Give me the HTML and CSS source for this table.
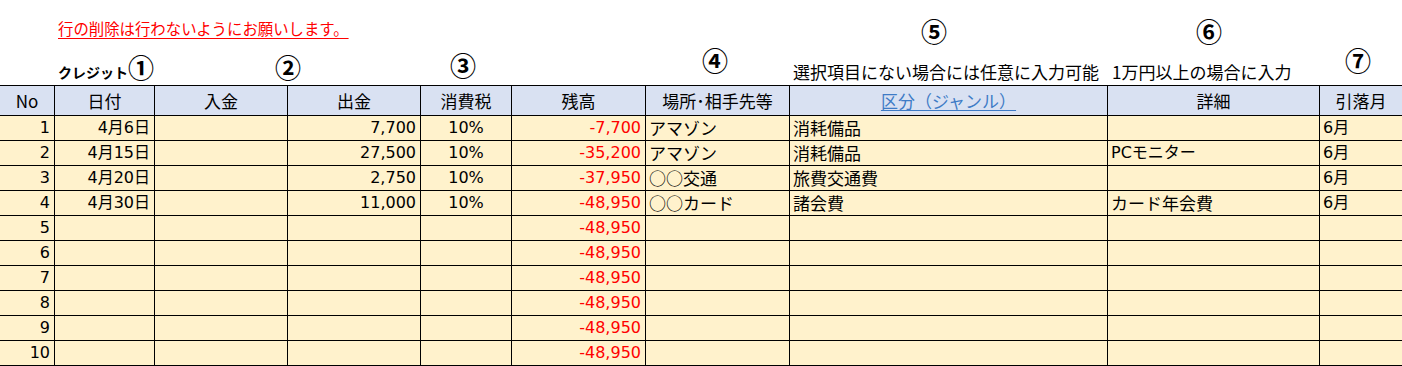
FILE: index.html
```html
<!DOCTYPE html>
<html lang="ja">
<head>
<meta charset="utf-8">
<title>クレジット</title>
<link rel="stylesheet" href="styles.css">
</head>
<body>
<div class="sheet">
  <div class="notes">
    <p class="warn">行の削除は行わないようにお願いします。</p>
    <span class="mark mark-5">⑤</span>
    <span class="mark mark-6">⑥</span>
    <div class="credit"><b class="credit-title">クレジット</b><span class="mark">①</span></div>
    <span class="mark mark-2">②</span>
    <span class="mark mark-3">③</span>
    <span class="mark mark-4">④</span>
    <p class="hint hint-5">選択項目にない場合には任意に入力可能</p>
    <p class="hint hint-6">1万円以上の場合に入力</p>
    <span class="mark mark-7">⑦</span>
  </div>

  <div class="ledger">
    <div class="h">No</div>
    <div class="h">日付</div>
    <div class="h">入金</div>
    <div class="h">出金</div>
    <div class="h">消費税</div>
    <div class="h">残高</div>
    <div class="h">場所･相手先等</div>
    <div class="h"><span class="link">区分（ジャンル）</span></div>
    <div class="h">詳細</div>
    <div class="h">引落月</div>

    <div class="c r num">1</div><div class="c r num">4月6日</div><div class="c"></div><div class="c r num">7,700</div><div class="c m num">10%</div><div class="c r num neg">-7,700</div><div class="c l">アマゾン</div><div class="c l">消耗備品</div><div class="c l"></div><div class="c l num">6月</div>
    <div class="c r num">2</div><div class="c r num">4月15日</div><div class="c"></div><div class="c r num">27,500</div><div class="c m num">10%</div><div class="c r num neg">-35,200</div><div class="c l">アマゾン</div><div class="c l">消耗備品</div><div class="c l num">PCモニター</div><div class="c l num">6月</div>
    <div class="c r num">3</div><div class="c r num">4月20日</div><div class="c"></div><div class="c r num">2,750</div><div class="c m num">10%</div><div class="c r num neg">-37,950</div><div class="c l">○○交通</div><div class="c l">旅費交通費</div><div class="c l"></div><div class="c l num">6月</div>
    <div class="c r num">4</div><div class="c r num">4月30日</div><div class="c"></div><div class="c r num">11,000</div><div class="c m num">10%</div><div class="c r num neg">-48,950</div><div class="c l">○○カード</div><div class="c l">諸会費</div><div class="c l">カード年会費</div><div class="c l num">6月</div>
    <div class="c r num">5</div><div class="c"></div><div class="c"></div><div class="c"></div><div class="c"></div><div class="c r num neg">-48,950</div><div class="c"></div><div class="c"></div><div class="c"></div><div class="c"></div>
    <div class="c r num">6</div><div class="c"></div><div class="c"></div><div class="c"></div><div class="c"></div><div class="c r num neg">-48,950</div><div class="c"></div><div class="c"></div><div class="c"></div><div class="c"></div>
    <div class="c r num">7</div><div class="c"></div><div class="c"></div><div class="c"></div><div class="c"></div><div class="c r num neg">-48,950</div><div class="c"></div><div class="c"></div><div class="c"></div><div class="c"></div>
    <div class="c r num">8</div><div class="c"></div><div class="c"></div><div class="c"></div><div class="c"></div><div class="c r num neg">-48,950</div><div class="c"></div><div class="c"></div><div class="c"></div><div class="c"></div>
    <div class="c r num">9</div><div class="c"></div><div class="c"></div><div class="c"></div><div class="c"></div><div class="c r num neg">-48,950</div><div class="c"></div><div class="c"></div><div class="c"></div><div class="c"></div>
    <div class="c r num">10</div><div class="c"></div><div class="c"></div><div class="c"></div><div class="c"></div><div class="c r num neg">-48,950</div><div class="c"></div><div class="c"></div><div class="c"></div><div class="c"></div>
  </div>
</div>
</body>
</html>
```

FILE: styles.css
```css
html, body {
  margin: 0;
  padding: 0;
  background: #ffffff;
}

body {
  font-family: "Noto Sans CJK JP", sans-serif;
  font-size: 17px;
  color: #000000;
}

.sheet {
  width: 1402px;
  height: 366px;
  overflow: hidden;
}

/* shared column template */
.notes,
.ledger {
  display: grid;
  grid-template-columns: 55px 100px 133px 133px 91px 134px 144px 318px 212px 82px;
}

/* ---------- annotation area above the table ---------- */
.notes {
  height: 85px;
  grid-template-rows: 46px 39px;
}

.notes p {
  margin: 0;
}

.warn {
  grid-column: 2 / 6;
  grid-row: 1;
  align-self: start;
  margin-top: 18px !important;
  padding-left: 3px;
  font-size: 15.4px;
  line-height: 20px;
  color: #ff0000;
  text-decoration: underline;
  text-underline-offset: 3px;
  white-space: nowrap;
}

.mark {
  font-family: "Noto Sans CJK JP", sans-serif;
  font-size: 26px;
  font-weight: 700;
  line-height: 30px;
}

.mark-5 {
  grid-column: 8;
  grid-row: 1;
  justify-self: center;
  align-self: end;
  margin: 0 30px 0 0;
}

.mark-6 {
  grid-column: 9;
  grid-row: 1;
  justify-self: center;
  align-self: end;
  margin: 0 10px 0 0;
}

.credit {
  grid-column: 2;
  grid-row: 2;
  align-self: end;
  display: flex;
  align-items: flex-end;
  padding-left: 3px;
  margin-bottom: 3px;
  white-space: nowrap;
}

.credit-title {
  font-size: 14px;
  line-height: 20px;
  font-weight: 700;
}

.mark-2 {
  grid-column: 3 / 5;
  grid-row: 2;
  justify-self: center;
  align-self: end;
  margin-bottom: 3px;
}

.mark-3 {
  grid-column: 5;
  grid-row: 2;
  justify-self: center;
  align-self: end;
  margin: 0 7px 5px 0;
}

.mark-4 {
  grid-column: 7;
  grid-row: 2;
  justify-self: center;
  align-self: end;
  margin: 0 6px 10px 0;
}

.hint {
  grid-row: 2;
  align-self: end;
  font-size: 17px;
  line-height: 24px;
  white-space: nowrap;
  margin-bottom: 1px !important;
}

.hint-5 {
  grid-column: 8;
  padding-left: 3px;
}

.hint-6 {
  grid-column: 9 / 11;
  padding-left: 4px;
}

.mark-7 {
  grid-column: 10;
  grid-row: 2;
  justify-self: center;
  align-self: end;
  margin: 0 6px 10px 0;
}

/* ---------- ledger table ---------- */
.ledger {
  grid-template-rows: 31px;
  grid-auto-rows: 25px;
}

.ledger > div {
  box-sizing: border-box;
  border-right: 1px solid #000000;
  border-bottom: 1px solid #000000;
  line-height: 24px;
  white-space: nowrap;
  overflow: hidden;
}

.ledger > div:nth-child(10n) {
  border-right: none;
}

.h {
  grid-row: 1;
  height: 31px;
  border-top: 1px solid #000000;
  background: #d9e1f2;
  text-align: center;
  line-height: 29px !important;
}

.c {
  background: #fff2cc;
}

.r {
  text-align: right;
  padding-right: 4px;
}

.l {
  text-align: left;
  padding-left: 3px;
}

.m {
  text-align: center;
}

.num {
  font-family: "DejaVu Sans", "Noto Sans CJK JP", sans-serif;
  font-size: 16px;
}

.neg {
  color: #ff0000;
}

.link {
  color: #3e7bc6;
  text-decoration: underline;
  text-underline-offset: 2px;
}
```
